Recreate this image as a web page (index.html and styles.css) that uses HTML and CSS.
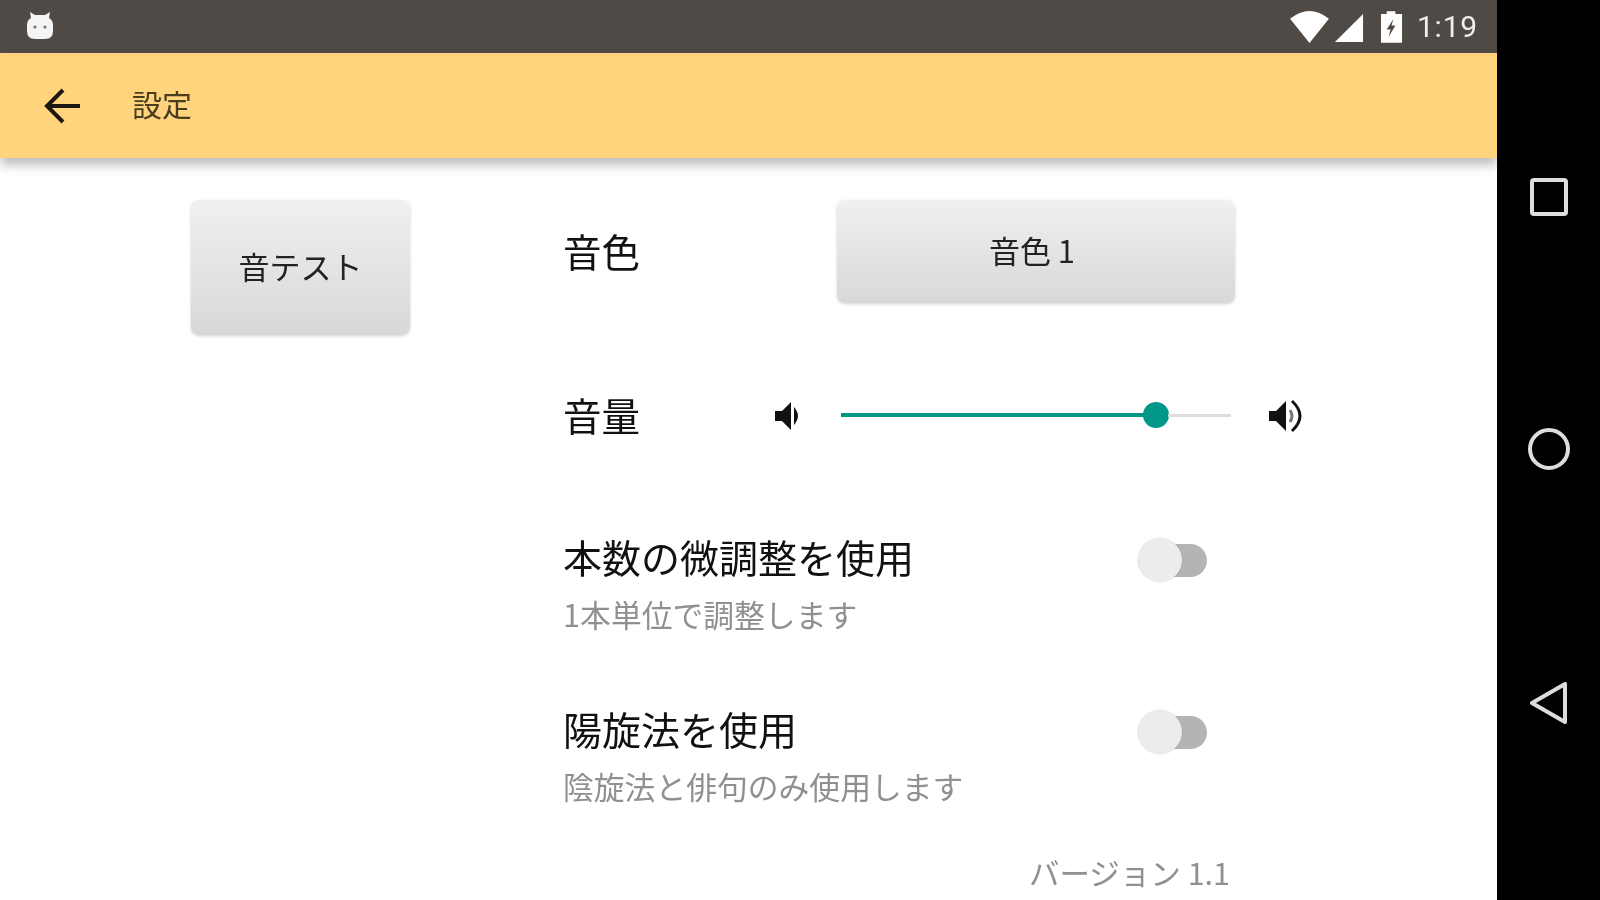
FILE: index.html
```html
<!DOCTYPE html>
<html lang="ja">
<head>
    <meta charset="UTF-8">
    <title>設定</title>
    <link rel="stylesheet" href="styles.css">
</head>
<body>
    <div class="device">
        <div class="screen">
            <div class="status_bar">
                <svg class="app_icon" width="28" height="30" viewBox="0 0 28 30">
                    <path d="M5 8 L4 2 L9 5 H19 L24 2 L23 8 Q27 10 27 15 V21 Q27 29 19 29 H9 Q1 29 1 21 V15 Q1 10 5 8 Z" fill="#f4f4f4"/>
                    <circle cx="9" cy="17" r="1.6" fill="#77736e"/>
                    <circle cx="19" cy="17" r="1.6" fill="#77736e"/>
                </svg>
                <div class="status_right">
                    <svg class="wifi" width="41" height="35" viewBox="0 0 42 36">
                        <path d="M1 10 Q21 -6 41 10 L21 35 Z" fill="#fff"/>
                    </svg>
                    <svg class="signal" width="30" height="30" viewBox="0 0 32 32">
                        <path d="M1 31 L31 1 V31 Z" fill="#fff"/>
                    </svg>
                    <svg class="battery" width="23" height="33" viewBox="0 0 24 34">
                        <path d="M7 0 H16 V3 H23 V33 H1 V3 H7 Z" fill="#fff"/>
                        <path d="M14 8 L7 19 H11 L9 27 L16 15 H12 Z" fill="#4f4a45"/>
                    </svg>
                    <span class="clock">1:19</span>
                </div>
            </div>
            <header class="app_bar">
                <svg class="back" width="38" height="38" viewBox="0 0 38 38">
                    <path d="M36 19 H4 M19 3 L3 19 L19 35" fill="none" stroke="#1c1710" stroke-width="4"/>
                </svg>
                <h1>設定</h1>
            </header>
            <main class="content">
                <div class="left_col">
                    <button class="btn btn_test">音テスト</button>
                </div>
                <div class="right_col">
                    <div class="row row_tone">
                        <span class="label label_tone">音色</span>
                        <button class="btn btn_tone">音色 1</button>
                    </div>
                    <div class="row row_volume">
                        <span class="label label_volume">音量</span>
                        <svg class="vol_low" width="28" height="32" viewBox="0 0 28 32">
                            <path d="M1 11 H8 L17 2 V30 L8 21 H1 Z" fill="#111"/>
                            <path d="M21 10 Q25 16 21 22 Z" fill="#111" stroke="#111" stroke-width="2"/>
                        </svg>
                        <div class="slider">
                            <div class="slider_fill"></div>
                            <div class="slider_thumb"></div>
                            <div class="slider_rest"></div>
                        </div>
                        <svg class="vol_high" width="36" height="36" viewBox="0 0 36 36">
                            <path d="M1 13 H8 L18 3 V33 L8 23 H1 Z" fill="#111"/>
                            <path d="M22 12 Q26 18 22 24" fill="none" stroke="#777" stroke-width="3"/>
                            <path d="M24 3 Q40 18 24 33" fill="none" stroke="#111" stroke-width="3"/>
                        </svg>
                    </div>
                    <div class="row row_switch row_fine">
                        <div class="switch_text">
                            <div class="switch_title">本数の微調整を使用</div>
                            <div class="switch_sub">1本単位で調整します</div>
                        </div>
                        <div class="switch"></div>
                    </div>
                    <div class="row row_switch row_yo">
                        <div class="switch_text">
                            <div class="switch_title">陽旋法を使用</div>
                            <div class="switch_sub">陰旋法と俳句のみ使用します</div>
                        </div>
                        <div class="switch"></div>
                    </div>
                    <div class="version">バージョン 1.1</div>
                </div>
            </main>
        </div>
        <nav class="nav_bar">
            <svg width="40" height="40" viewBox="0 0 40 40">
                <rect x="3" y="3" width="34" height="34" rx="2" fill="none" stroke="#ddd" stroke-width="4"/>
            </svg>
            <svg width="44" height="44" viewBox="0 0 44 44">
                <circle cx="22" cy="22" r="19" fill="none" stroke="#ddd" stroke-width="4"/>
            </svg>
            <svg width="40" height="44" viewBox="0 0 40 44">
                <path d="M36 3 V41 L3 22 Z" fill="none" stroke="#ddd" stroke-width="4" stroke-linejoin="round"/>
            </svg>
        </nav>
    </div>
</body>
</html>
```

FILE: styles.css
```css
* {
    margin: 0;
    padding: 0;
    box-sizing: border-box;
}

html, body {
    height: 900px;
    overflow: hidden;
    background-color: #000;
}

body {
    font-family: "Noto Sans CJK JP", "Noto Sans", sans-serif;
}

.device {
    display: flex;
    width: 1600px;
    height: 900px;
}

/* the reference is an upscaled capture, so everything is a bit soft */
.status_bar > *, .app_bar > *, .content, .nav_bar svg {
    filter: blur(0.7px);
}

.screen {
    display: flex;
    flex-direction: column;
    width: 1497px;
    background-color: #fff;
}

.status_bar {
    display: flex;
    align-items: center;
    justify-content: space-between;
    height: 53px;
    padding: 0 19px 0 26px;
    background-color: #4f4a45;
}

.app_icon { margin-top: -4px; }

.status_right {
    display: flex;
    align-items: center;
}

.signal { margin-left: 4px; margin-top: 3px; }
.battery { margin-left: 16px; margin-top: 2px; }

.clock {
    margin-left: 14px;
    font-family: Roboto, sans-serif;
    font-size: 30px;
    letter-spacing: 0.8px;
    color: #eee;
}

.app_bar {
    display: flex;
    align-items: center;
    height: 105px;
    padding-left: 44px;
    background-color: #ffd47c;
    box-shadow: 0 7px 10px rgba(0, 0, 0, 0.26);
    position: relative;
}

.app_bar h1 {
    margin-left: 50px;
    padding-bottom: 6px;
    font-size: 30px;
    font-weight: 400;
    color: #4a3c1e;
}

.content {
    display: flex;
    flex: 1;
    padding-top: 42px;
}

.left_col {
    width: 563px;
    padding-left: 191px;
}

.btn {
    border: none;
    border-radius: 8px;
    background: linear-gradient(#f0f0f0, #d8d8d8);
    box-shadow: 0 1px 3px rgba(0, 0, 0, 0.18);
    font-family: inherit;
    color: #222;
}

.btn_test {
    width: 219px;
    height: 135px;
    padding-bottom: 4px;
    font-size: 31px;
}

.btn_tone {
    width: 398px;
    height: 103px;
    padding: 0 8px 4px 0;
    font-size: 31px;
}

.right_col {
    width: 744px;
}

.row {
    display: flex;
    align-items: center;
}

.label {
    padding-bottom: 4px;
    font-size: 38.5px;
    line-height: 60px;
    color: #111;
}

.label_tone { width: 274px; }
.label_volume { width: 211px; }

.row_volume {
    margin-top: 83px;
    height: 60px;
}

.slider {
    display: flex;
    align-items: center;
    width: 390px;
    margin-left: 39px;
    margin-bottom: 2px;
}

.slider_fill {
    width: 303px;
    height: 4px;
    background-color: #009688;
}

.slider_thumb {
    width: 26px;
    height: 26px;
    margin: 0 -1px;
    border-radius: 50%;
    background-color: #009688;
}

.slider_rest {
    flex: 1;
    height: 3px;
    background-color: #ddd;
}

.vol_high { margin-left: 37px; }

.row_switch {
    align-items: flex-start;
}

.row_fine { margin-top: 87px; }
.row_yo { margin-top: 69px; }

.switch_text {
    width: 575px;
}

.switch_title {
    margin-bottom: 17px;
    font-size: 39px;
    line-height: 46px;
    color: #111;
}

.switch_sub {
    margin-bottom: 4px;
    font-size: 30.8px;
    line-height: 36px;
    color: #909090;
}

.switch {
    position: relative;
    width: 69px;
    height: 33px;
    margin-top: 11px;
    border-radius: 17px;
    background-color: #b4b4b4;
}

.switch::before {
    content: "";
    position: absolute;
    left: 0;
    top: -6px;
    width: 44px;
    height: 44px;
    border-radius: 50%;
    background-color: #ececec;
    box-shadow: 0 0 2px rgba(0, 0, 0, 0.15);
}

.version {
    width: 667px;
    margin-top: 46px;
    font-size: 30.5px;
    line-height: 36px;
    text-align: right;
    color: #909090;
}

.nav_bar {
    display: flex;
    flex-direction: column;
    align-items: center;
    justify-content: space-between;
    width: 103px;
    padding: 177px 0 175px;
    background-color: #000;
}
```
